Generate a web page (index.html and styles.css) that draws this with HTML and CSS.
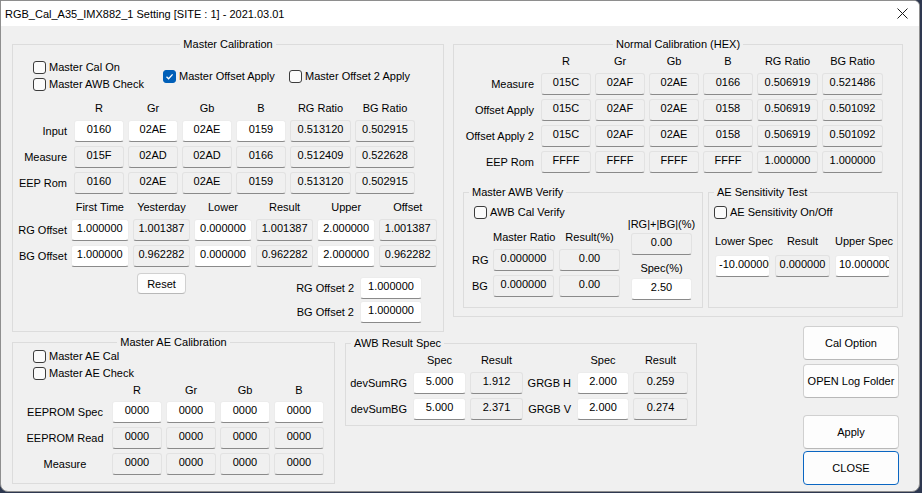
FILE: index.html
```html
<!DOCTYPE html>
<html>
<head>
<meta charset="utf-8">
<title>RGB_Cal Setting</title>
<link rel="stylesheet" href="styles.css">
</head>
<body>
<div class="window">
  <div class="titlebar">
    <span class="title">RGB_Cal_A35_IMX882_1 Setting [SITE : 1] - 2021.03.01</span>
    <svg class="close" width="11" height="11" viewBox="0 0 11 11"><path d="M0.5 0.5 L10.5 10.5 M10.5 0.5 L0.5 10.5" stroke="#1a1a1a" stroke-width="1"/></svg>
  </div>
  <div class="client">

    <fieldset class="gb master-cal">
      <legend class="lg-center">Master Calibration</legend>
      <div class="mc-checks">
        <div class="chk-stack mc-stack">
          <label class="chk"><span class="box"></span>Master Cal On</label>
          <label class="chk"><span class="box"></span>Master AWB Check</label>
        </div>
        <label class="chk mc-offset"><span class="box checked"><svg width="11" height="11" viewBox="0 0 11 11"><path d="M2.5 5.8 L4.6 7.8 L8.6 3.4" fill="none" stroke="#fff" stroke-width="1.3"/></svg></span>Master Offset Apply</label>
        <label class="chk"><span class="box"></span>Master Offset 2 Apply</label>
      </div>

      <div class="grid mc-grid1">
        <span></span><span class="hd">R</span><span class="hd">Gr</span><span class="hd">Gb</span><span class="hd">B</span><span class="hd">RG Ratio</span><span class="hd">BG Ratio</span>
        <span class="lbl">Input</span><span class="f w">0160</span><span class="f w">02AE</span><span class="f w">02AE</span><span class="f w">0159</span><span class="f">0.513120</span><span class="f">0.502915</span>
        <span class="lbl">Measure</span><span class="f">015F</span><span class="f">02AD</span><span class="f">02AD</span><span class="f">0166</span><span class="f">0.512409</span><span class="f">0.522628</span>
        <span class="lbl">EEP Rom</span><span class="f">0160</span><span class="f">02AE</span><span class="f">02AE</span><span class="f">0159</span><span class="f">0.513120</span><span class="f">0.502915</span>
      </div>

      <div class="grid mc-grid2">
        <span></span><span class="hd">First Time</span><span class="hd">Yesterday</span><span class="hd">Lower</span><span class="hd">Result</span><span class="hd">Upper</span><span class="hd">Offset</span>
        <span class="lbl">RG Offset</span><span class="f w">1.000000</span><span class="f">1.001387</span><span class="f w">0.000000</span><span class="f">1.001387</span><span class="f w">2.000000</span><span class="f">1.001387</span>
        <span class="lbl">BG Offset</span><span class="f w">1.000000</span><span class="f">0.962282</span><span class="f w">0.000000</span><span class="f">0.962282</span><span class="f w">2.000000</span><span class="f">0.962282</span>
      </div>

      <div class="mc-bottom">
        <button class="btn reset">Reset</button>
        <div class="grid mc-off2">
          <span class="lbl">RG Offset 2</span><span class="f w">1.000000</span>
          <span class="lbl">BG Offset 2</span><span class="f w">1.000000</span>
        </div>
      </div>
    </fieldset>

    <fieldset class="gb normal-cal">
      <legend class="lg-center">Normal Calibration (HEX)</legend>
      <div class="grid nc-grid">
        <span></span><span class="hd">R</span><span class="hd">Gr</span><span class="hd">Gb</span><span class="hd">B</span><span class="hd">RG Ratio</span><span class="hd">BG Ratio</span>
        <span class="lbl">Measure</span><span class="f">015C</span><span class="f">02AF</span><span class="f">02AE</span><span class="f">0166</span><span class="f">0.506919</span><span class="f">0.521486</span>
        <span class="lbl">Offset Apply</span><span class="f">015C</span><span class="f">02AF</span><span class="f">02AE</span><span class="f">0158</span><span class="f">0.506919</span><span class="f">0.501092</span>
        <span class="lbl">Offset Apply 2</span><span class="f">015C</span><span class="f">02AF</span><span class="f">02AE</span><span class="f">0158</span><span class="f">0.506919</span><span class="f">0.501092</span>
        <span class="lbl">EEP Rom</span><span class="f">FFFF</span><span class="f">FFFF</span><span class="f">FFFF</span><span class="f">FFFF</span><span class="f">1.000000</span><span class="f">1.000000</span>
      </div>

      <div class="nc-sub">
        <fieldset class="gb awb-verify">
          <legend class="lg-left">Master AWB Verify</legend>
          <div class="av-body">
            <div class="av-left">
              <label class="chk av-chk"><span class="box"></span>AWB Cal Verify</label>
              <div class="grid av-grid">
                <span></span><span class="hd">Master Ratio</span><span class="hd">Result(%)</span>
                <span class="lbl-l">RG</span><span class="f">0.000000</span><span class="f">0.00</span>
                <span class="lbl-l">BG</span><span class="f">0.000000</span><span class="f">0.00</span>
              </div>
            </div>
            <div class="av-right">
              <span class="hd av-h1">|RG|+|BG|(%)</span>
              <span class="f av-f1">0.00</span>
              <span class="hd av-h2">Spec(%)</span>
              <span class="f w av-f2">2.50</span>
            </div>
          </div>
        </fieldset>

        <fieldset class="gb ae-sens">
          <legend class="lg-left">AE Sensitivity Test</legend>
          <label class="chk as-chk"><span class="box"></span>AE Sensitivity On/Off</label>
          <div class="grid as-grid">
            <span class="hd">Lower Spec</span><span class="hd">Result</span><span class="hd">Upper Spec</span>
            <span class="f w clip">-10.000000</span><span class="f">0.000000</span><span class="f w clip">10.000000</span>
          </div>
        </fieldset>
      </div>
    </fieldset>

    <div class="buttons">
      <button class="btn big">Cal Option</button>
      <button class="btn big b2">OPEN Log Folder</button>
      <button class="btn big b3">Apply</button>
      <button class="btn big b4 default">CLOSE</button>
    </div>

    <fieldset class="gb master-ae">
      <legend class="lg-center">Master AE Calibration</legend>
      <div class="chk-stack ae-checks">
        <label class="chk"><span class="box"></span>Master AE Cal</label>
        <label class="chk"><span class="box"></span>Master AE Check</label>
      </div>
      <div class="grid ae-grid">
        <span></span><span class="hd">R</span><span class="hd">Gr</span><span class="hd">Gb</span><span class="hd">B</span>
        <span class="lbl-c">EEPROM Spec</span><span class="f w">0000</span><span class="f w">0000</span><span class="f w">0000</span><span class="f w">0000</span>
        <span class="lbl-c">EEPROM Read</span><span class="f">0000</span><span class="f">0000</span><span class="f">0000</span><span class="f">0000</span>
        <span class="lbl-c">Measure</span><span class="f">0000</span><span class="f">0000</span><span class="f">0000</span><span class="f">0000</span>
      </div>
    </fieldset>

    <fieldset class="gb awb-result">
      <legend class="lg-left">AWB Result Spec</legend>
      <div class="grid ar-grid">
        <span></span><span class="hd">Spec</span><span class="hd">Result</span><span></span><span class="hd">Spec</span><span class="hd">Result</span>
        <span class="lbl">devSumRG</span><span class="f w">5.000</span><span class="f">1.912</span><span class="lbl">GRGB H</span><span class="f w">2.000</span><span class="f">0.259</span>
        <span class="lbl">devSumBG</span><span class="f w">5.000</span><span class="f">2.371</span><span class="lbl">GRGB V</span><span class="f w">2.000</span><span class="f">0.274</span>
      </div>
    </fieldset>

  </div>
</div>
</body>
</html>
```

FILE: styles.css
```css
html, body {
  margin: 0;
  padding: 0;
}
body {
  width: 922px;
  height: 493px;
  overflow: hidden;
  background: #2e3850;
  font-family: "Liberation Sans", Arial, sans-serif;
  font-size: 11px;
  color: #000;
}
.window {
  box-sizing: border-box;
  width: 920px;
  height: 492px;
  border: 1px solid #8e8e8e;
  border-radius: 0 6px 8px 8px;
  background: #f0f0f0;
  overflow: hidden;
  display: flex;
  flex-direction: column;
}
.titlebar {
  height: 25px;
  flex: 0 0 25px;
  background: #ffffff;
  display: flex;
  align-items: center;
  padding-left: 4px;
  padding-right: 11px;
}
.title {
  font-size: 11px;
  flex: 1;
  color: #000;
}
.close {
  display: block;
}
.client {
  flex: 1;
  display: grid;
  grid-template-columns: 333px 99px 9px 244px 106px 96px 4px;
  grid-template-rows: 289px 9px 1fr;
  padding: 11px 0 0 11px;
}

/* group boxes */
.gb {
  margin: 0;
  padding: 0;
  min-width: 0;
  border: 1px solid #dcdcdc;
  box-sizing: border-box;
}
.gb legend {
  font-size: 11px;
  line-height: 14px;
  padding: 0 3px;
}
.lg-center {
  margin: 0 auto;
}
.lg-left {
  margin-left: 5px;
}

.master-cal {
  grid-column: 1 / 3;
  grid-row: 1 / 3;
  height: 295px;
  align-self: start;
}
.normal-cal {
  grid-column: 4 / 8;
  grid-row: 1;
  height: 280px;
  align-self: start;
}
.buttons {
  grid-column: 6;
  grid-row: 2 / 4;
  align-self: start;
  display: flex;
  flex-direction: column;
}
.master-ae {
  grid-column: 1;
  grid-row: 3;
  width: 323px;
  height: 149px;
  align-self: start;
}
.awb-result {
  grid-column: 2 / 5;
  grid-row: 3;
  height: 90px;
  margin-top: 1px;
  align-self: start;
}

/* checkbox */
.chk {
  display: flex;
  align-items: center;
  height: 17px;
  line-height: 17px;
  white-space: nowrap;
}
.box {
  box-sizing: border-box;
  width: 13px;
  height: 13px;
  border: 1px solid #3c3c3c;
  border-radius: 3px;
  background: #fbfbfb;
  margin-right: 3px;
  display: flex;
  align-items: center;
  justify-content: center;
  flex: 0 0 13px;
}
.box.checked {
  background: #005fb8;
  border-color: #005fb8;
}
.box svg {
  display: block;
}
.chk-stack {
  display: flex;
  flex-direction: column;
}

/* grids and fields */
.grid {
  display: grid;
  column-gap: 4px;
  row-gap: 4px;
  align-items: center;
}
.hd {
  text-align: center;
  white-space: nowrap;
  line-height: 16px;
}
.lbl {
  text-align: right;
  white-space: nowrap;
  padding-right: 3px;
}
.lbl-l {
  white-space: nowrap;
  padding-left: 8px;
}
.lbl-c {
  text-align: center;
  white-space: nowrap;
  padding-left: 9px;
}
.f {
  box-sizing: border-box;
  height: 22px;
  border: 1px solid #e2e2e2;
  border-bottom-color: #8a8a8a;
  border-radius: 3px;
  background: #f0f0f0;
  text-align: center;
  line-height: 17px;
  white-space: nowrap;
  overflow: hidden;
  font-size: 11px;
}
.f.w {
  background: #ffffff;
  border-color: #ececec;
  border-bottom-color: #8a8a8a;
}
.f.clip {
  text-align: left;
  padding-left: 3px;
}

/* master calibration */
.mc-checks {
  display: flex;
  align-items: center;
  margin-top: 8px;
  margin-left: 20px;
}
.mc-stack {
  flex: 0 0 130px;
}
.mc-offset {
  flex: 0 0 126px;
}
.mc-grid1 {
  grid-template-columns: 57px 50px 50px 50px 50px 61px 60px;
  grid-template-rows: 16px 22px 22px 22px;
  margin-top: 7px;
}
.mc-grid2 {
  grid-template-columns: 54px repeat(6, 57.6px);
  grid-template-rows: 16px 22px 22px;
  margin-top: 5px;
}
.mc-grid2 .lbl {
  padding-right: 0;
}
.mc-bottom {
  display: flex;
  align-items: flex-start;
}
.btn {
  font-family: "Liberation Sans", Arial, sans-serif;
  font-size: 11px;
  color: #000;
  background: #fdfdfd;
  border: 1px solid #d0d0d0;
  border-bottom-color: #b8b8b8;
  border-radius: 4px;
  padding: 0;
  box-sizing: border-box;
}
.reset {
  width: 49px;
  height: 21px;
  margin-left: 124px;
  margin-top: 6px;
}
.mc-off2 {
  grid-template-columns: auto 62px;
  grid-template-rows: 22px 22px;
  column-gap: 3px;
  row-gap: 2px;
  margin-left: auto;
  margin-right: 21px;
  margin-top: 10px;
}

/* normal calibration */
.nc-grid {
  grid-template-columns: 83px 50px 50px 50px 50px 61px 61px;
  grid-template-rows: 16px 22px 22px 22px 22px;
  margin-top: 2px;
}
.nc-sub {
  display: flex;
  margin-left: 9px;
  margin-top: 12px;
}
.awb-verify {
  width: 240px;
  height: 123px;
}
.ae-sens {
  width: 190px;
  height: 123px;
  margin-left: 5px;
}
.av-body {
  display: flex;
  align-items: flex-start;
}
.av-chk {
  margin-left: 10px;
  margin-top: 5px;
}
.av-grid {
  grid-template-columns: 24px 61px 61px;
  column-gap: 5px;
  grid-template-rows: 16px 22px 22px;
  margin-top: 8px;
}
.av-right {
  display: flex;
  flex-direction: column;
  width: 61px;
  margin-left: 11px;
}
.av-h1 {
  margin-top: 17px;
  margin-left: -6px;
  margin-right: -6px;
}
.av-f1 {
  margin-top: 1px;
}
.av-h2 {
  margin-top: 5px;
}
.av-f2 {
  margin-top: 2px;
}
.as-chk {
  margin-left: 5px;
  margin-top: 5px;
}
.as-grid {
  grid-template-columns: 55px 55px 55px;
  column-gap: 5px;
  row-gap: 6px;
  grid-template-rows: 16px 22px;
  margin-left: 6px;
  margin-top: 12px;
}

/* buttons */
.big {
  width: 96px;
  height: 34px;
  font-size: 11px;
}
.b2 {
  margin-top: 4px;
}
.b3 {
  margin-top: 17px;
}
.b4 {
  margin-top: 2px;
}
.default {
  border: 1px solid #0a66c2;
}

/* master AE */
.ae-checks {
  margin-left: 20px;
  margin-top: -1px;
}
.ae-grid {
  grid-template-columns: 95px 50px 50px 50px 50px;
  grid-template-rows: 14px 22px 22px 22px;
  margin-top: 1px;
}

/* AWB result */
.ar-grid {
  grid-template-columns: 63px 53px 53px 46px 52px 55px;
  grid-template-rows: 16px 22px 22px;
  margin-top: 2px;
}
.ar-grid .lbl {
  padding-right: 2px;
}
```
